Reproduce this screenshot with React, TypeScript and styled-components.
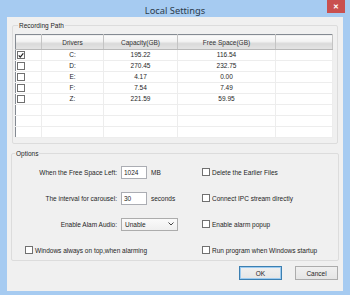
import React from "react";
import styled, { createGlobalStyle } from "styled-components";

const GlobalStyle = createGlobalStyle`
  html, body {
    margin: 0;
    padding: 0;
    width: 350px;
    height: 295px;
    overflow: hidden;
    background: #a6cbf1;
  }
  * {
    box-sizing: border-box;
  }
`;

const drives = [
  { checked: true, name: "C:", capacity: "195.22", free: "116.54" },
  { checked: false, name: "D:", capacity: "270.45", free: "232.75" },
  { checked: false, name: "E:", capacity: "4.17", free: "0.00" },
  { checked: false, name: "F:", capacity: "7.54", free: "7.49" },
  { checked: false, name: "Z:", capacity: "221.59", free: "59.95" },
];

const Check = ({ checked = false }: { checked?: boolean }) => (
  <CheckBox>
    {checked && (
      <svg width="7" height="7" viewBox="0 0 7 7">
        <path d="M0.8 3.4 L2.6 5.4 L6.2 0.9" fill="none" stroke="#222" strokeWidth="1.4" />
      </svg>
    )}
  </CheckBox>
);

const App = () => {
  return (
    <Window>
      <GlobalStyle />
      <TitleBar>
        <Title>Local Settings</Title>
        <CloseButton>✕</CloseButton>
      </TitleBar>
      <Client>
        <RecordingGroup>
          <Legend>Recording Path</Legend>
          <DriveTable>
            <colgroup>
              <col style={{ width: 26 }} />
              <col style={{ width: 62 }} />
              <col style={{ width: 74 }} />
              <col style={{ width: 98 }} />
              <col />
            </colgroup>
            <thead>
              <tr>
                <HeadCell></HeadCell>
                <HeadCell>Drivers</HeadCell>
                <HeadCell>Capacity(GB)</HeadCell>
                <HeadCell>Free Space(GB)</HeadCell>
                <HeadCell></HeadCell>
              </tr>
            </thead>
            <tbody>
              {drives.map((d) => (
                <tr key={d.name}>
                  <CheckCell>
                    <Check checked={d.checked} />
                  </CheckCell>
                  <Cell>{d.name}</Cell>
                  <Cell>{d.capacity}</Cell>
                  <Cell>{d.free}</Cell>
                  <Cell></Cell>
                </tr>
              ))}
              {[0, 1, 2].map((i) => (
                <tr key={"empty" + i}>
                  <Cell></Cell>
                  <Cell></Cell>
                  <Cell></Cell>
                  <Cell></Cell>
                  <Cell></Cell>
                </tr>
              ))}
            </tbody>
          </DriveTable>
        </RecordingGroup>

        <OptionsGroup>
          <Legend>Options</Legend>
          <OptionsGrid>
            <FieldRow>
              <FieldLabel>When the Free Space Left:</FieldLabel>
              <TextBox>1024</TextBox>
              <Unit>MB</Unit>
            </FieldRow>
            <CheckRow>
              <Check />
              <span>Delete the Earlier Files</span>
            </CheckRow>

            <FieldRow>
              <FieldLabel>The interval for carousel:</FieldLabel>
              <TextBox>30</TextBox>
              <Unit>seconds</Unit>
            </FieldRow>
            <CheckRow>
              <Check />
              <span>Connect IPC stream directly</span>
            </CheckRow>

            <FieldRow>
              <FieldLabel>Enable Alam Audio:</FieldLabel>
              <Combo>
                <span>Unable</span>
                <svg width="6" height="4" viewBox="0 0 6 4">
                  <path d="M0.5 0.5 L3 3 L5.5 0.5" fill="none" stroke="#444" strokeWidth="1" />
                </svg>
              </Combo>
            </FieldRow>
            <CheckRow>
              <Check />
              <span>Enable alarm popup</span>
            </CheckRow>

            <CheckRow $indent={13}>
              <Check />
              <span>Windows always on top,when alarming</span>
            </CheckRow>
            <CheckRow>
              <Check />
              <span>Run program when Windows startup</span>
            </CheckRow>
          </OptionsGrid>
        </OptionsGroup>

        <ButtonBar>
          <Button $primary>OK</Button>
          <Button>Cancel</Button>
        </ButtonBar>
      </Client>
    </Window>
  );
};

const Window = styled.div`
  width: 350px;
  height: 295px;
  display: flex;
  flex-direction: column;
  background: #a6cbf1;
  font-family: "Liberation Sans", Arial, sans-serif;
  font-size: 6.5px;
  color: #1e1e1e;
`;

const TitleBar = styled.div`
  position: relative;
  height: 17px;
  display: flex;
  align-items: center;
  justify-content: center;
  padding-top: 3px;
`;

const Title = styled.div`
  font-family: "Noto Sans", "Open Sans", sans-serif;
  font-size: 9.3px;
  color: #2c3b4c;
`;

const CloseButton = styled.div`
  position: absolute;
  top: 0;
  right: 5px;
  width: 18px;
  height: 13px;
  background: #c9504f;
  color: #fff;
  font-size: 7px;
  font-weight: bold;
  display: flex;
  align-items: center;
  justify-content: center;
`;

const Client = styled.div`
  flex: 1;
  margin: 0 7px 4px 7px;
  background: #f0f0f0;
  display: flex;
  flex-direction: column;
  padding-top: 4px;
`;

const Group = styled.fieldset`
  margin: 0;
  border: 1px solid #dcdcdc;
  border-radius: 2px;
`;

const RecordingGroup = styled(Group)`
  margin: 0 5px;
  padding: 4px 4px 5px 2px;
`;

const OptionsGroup = styled(Group)`
  margin: 5px 4px 0;
  padding: 0;
  height: 112px;
`;

const Legend = styled.legend`
  padding: 0 1px;
  margin-left: 3px;
  line-height: 9px;
  font-size: 6.5px;
  color: #1e1e1e;
`;

const DriveTable = styled.table`
  width: 318px;
  border-collapse: collapse;
  table-layout: fixed;
  background: #fff;
  border: 1px solid #848a92;
`;

const HeadCell = styled.th`
  height: 15px;
  padding: 0;
  font-weight: normal;
  font-size: 6.5px;
  color: #333;
  text-align: center;
  background: linear-gradient(#fbfbfb 0%, #f2f2f2 45%, #d9d9d9 55%, #e4e4e4 100%);
  border-right: 1px solid #c4c4c4;
  border-bottom: 1px solid #b8b8b8;
`;

const Cell = styled.td`
  height: 11px;
  padding: 0;
  text-align: center;
  font-size: 6.5px;
  line-height: 10px;
  border-right: 1px solid #ededed;
  border-bottom: 1px solid #ededed;
`;

const CheckCell = styled(Cell)`
  text-align: left;
  padding-left: 1px;
  line-height: 0;
`;

const CheckBox = styled.span`
  display: inline-flex;
  align-items: center;
  justify-content: center;
  width: 8px;
  height: 8px;
  border: 1px solid #707070;
  background: #fff;
  flex-shrink: 0;
`;

const OptionsGrid = styled.div`
  display: grid;
  grid-template-columns: 190px 1fr;
  grid-auto-rows: 26px;
  align-items: center;
  padding-top: 1px;
`;

const FieldRow = styled.div`
  display: flex;
  align-items: center;
  gap: 4px;
`;

const FieldLabel = styled.span`
  width: 105px;
  text-align: right;
  white-space: nowrap;
`;

const TextBox = styled.div`
  width: 26px;
  height: 13px;
  border: 1px solid #abadb3;
  background: #fff;
  padding: 1px 2px;
  line-height: 9px;
`;

const Unit = styled.span`
  white-space: nowrap;
`;

const Combo = styled.div`
  width: 57px;
  height: 13px;
  border: 1px solid #acacac;
  background: linear-gradient(#fafafa, #efefef);
  display: flex;
  align-items: center;
  justify-content: space-between;
  padding: 0 3px 0 3px;
`;

const CheckRow = styled.div<{ $indent?: number }>`
  display: flex;
  align-items: center;
  gap: 2px;
  padding-left: ${(p) => p.$indent ?? 0}px;
  white-space: nowrap;
`;

const ButtonBar = styled.div`
  display: flex;
  justify-content: flex-end;
  gap: 13px;
  padding: 5px 5px 0 0;
`;

const Button = styled.div<{ $primary?: boolean }>`
  width: 43px;
  height: 14px;
  display: flex;
  align-items: center;
  justify-content: center;
  border: 1px solid ${(p) => (p.$primary ? "#3c7fb1" : "#acacac")};
  box-shadow: ${(p) => (p.$primary ? "inset 0 0 0 1px #9ccbf0" : "none")};
  background: linear-gradient(#f0f0f0, #e5e5e5);
  font-size: 6.5px;
`;

export default App;
